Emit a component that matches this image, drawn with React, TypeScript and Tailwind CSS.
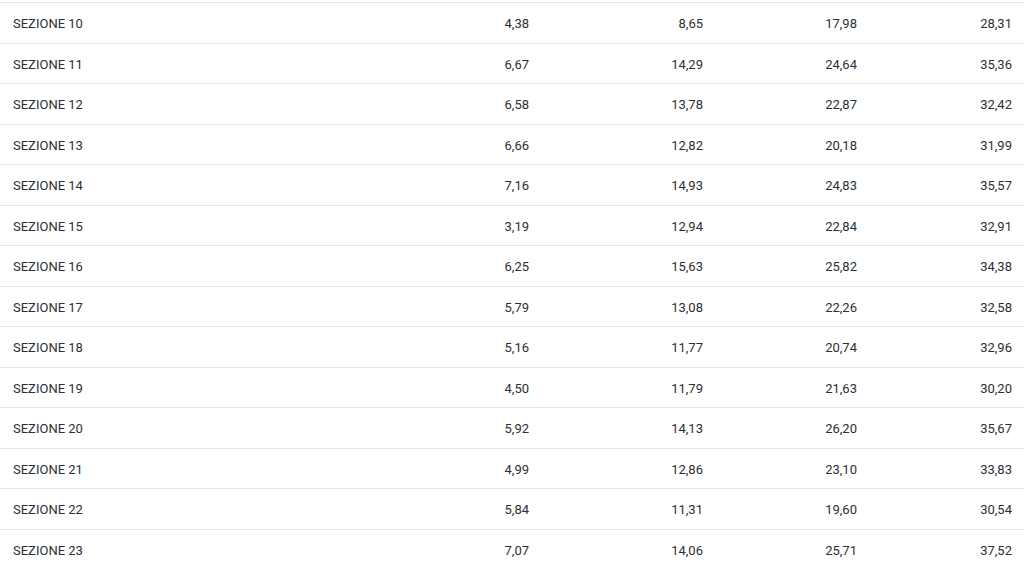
const rows: [string, string, string, string, string][] = [
  ['SEZIONE 10', '4,38', '8,65', '17,98', '28,31'],
  ['SEZIONE 11', '6,67', '14,29', '24,64', '35,36'],
  ['SEZIONE 12', '6,58', '13,78', '22,87', '32,42'],
  ['SEZIONE 13', '6,66', '12,82', '20,18', '31,99'],
  ['SEZIONE 14', '7,16', '14,93', '24,83', '35,57'],
  ['SEZIONE 15', '3,19', '12,94', '22,84', '32,91'],
  ['SEZIONE 16', '6,25', '15,63', '25,82', '34,38'],
  ['SEZIONE 17', '5,79', '13,08', '22,26', '32,58'],
  ['SEZIONE 18', '5,16', '11,77', '20,74', '32,96'],
  ['SEZIONE 19', '4,50', '11,79', '21,63', '30,20'],
  ['SEZIONE 20', '5,92', '14,13', '26,20', '35,67'],
  ['SEZIONE 21', '4,99', '12,86', '23,10', '33,83'],
  ['SEZIONE 22', '5,84', '11,31', '19,60', '30,54'],
  ['SEZIONE 23', '7,07', '14,06', '25,71', '37,52'],
];

export default function App() {
  return (
    <div className="w-[1024px] h-[569px] overflow-hidden bg-white pt-[2px] font-['Roboto',sans-serif] text-[13px] text-[#2a3036]">
      <div className="border-t border-[#e8e8e8]">
        {rows.map((r) => (
          <div
            key={r[0]}
            className="grid grid-cols-[367px_174px_174px_154px_155px] h-[40.5px] pt-[2px] items-center border-b border-[#e8e8e8]"
          >
            <span className="pl-[13px]">{r[0]}</span>
            <span className="text-right pr-3">{r[1]}</span>
            <span className="text-right pr-3">{r[2]}</span>
            <span className="text-right pr-3">{r[3]}</span>
            <span className="text-right pr-3">{r[4]}</span>
          </div>
        ))}
      </div>
    </div>
  );
}
